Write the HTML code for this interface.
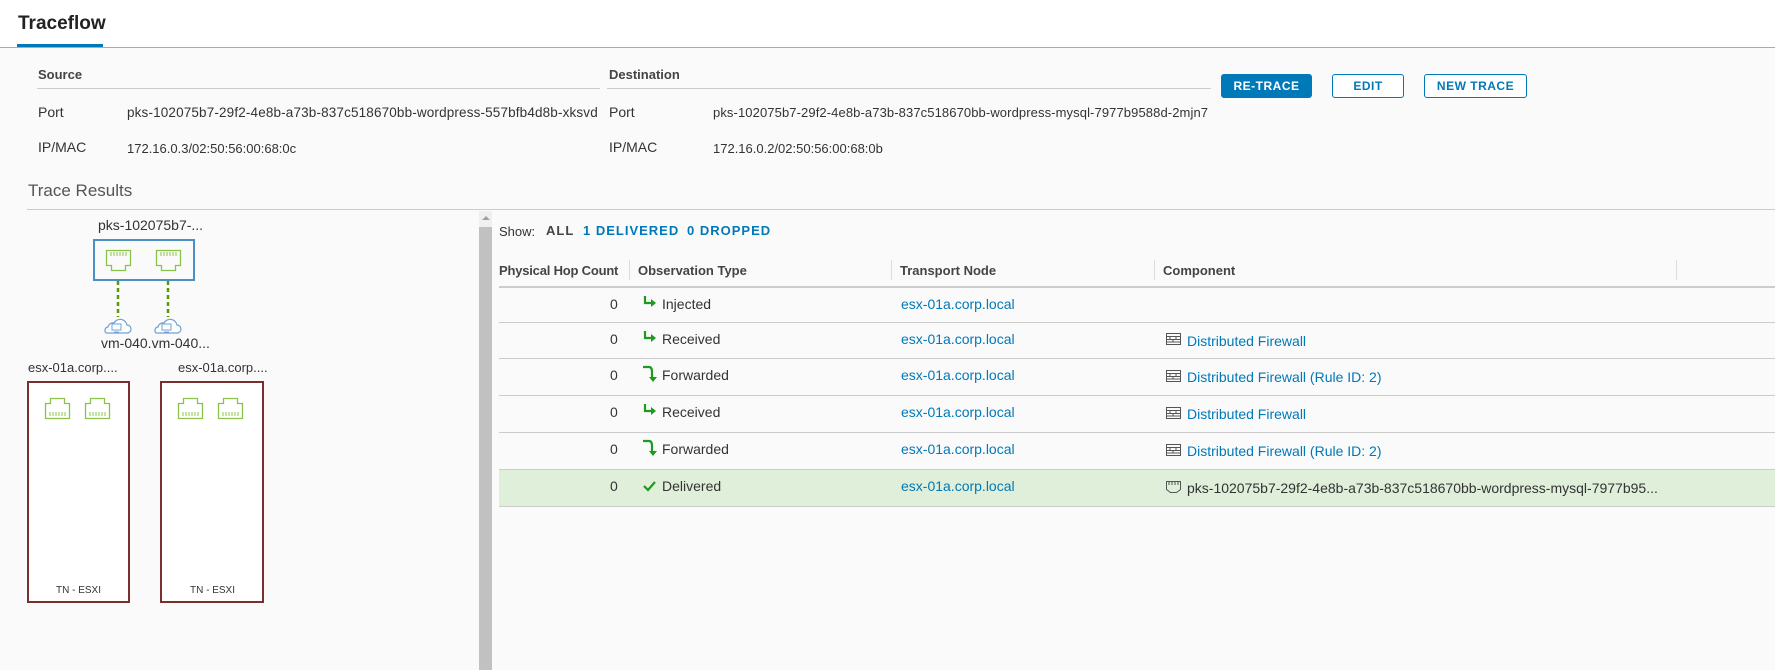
<!DOCTYPE html>
<html><head><meta charset="utf-8"><style>
*{margin:0;padding:0;box-sizing:border-box}
body{width:1775px;height:670px;background:#fafafa;font-family:"Liberation Sans",sans-serif;color:#333;position:relative;overflow:hidden}
.a{position:absolute;white-space:nowrap}
.lk{color:#0079b8}
.lbl{font-size:13px;font-weight:bold;color:#444}
.v{font-size:13px;color:#333}
.btn{position:absolute;height:24px;border:1px solid #0079b8;border-radius:3px;font-size:12px;font-weight:bold;color:#0079b8;text-align:center;line-height:22px;letter-spacing:.5px;background:#fff}
.sep{position:absolute;height:1px;background:#ccc;left:499px;right:0}
.col{position:absolute;top:260px;width:1px;height:20px;background:#ddd}
.r{font-size:14px}
</style></head><body>
<div class="a" style="left:0;top:0;width:1775px;height:47px;background:#fff"></div>
<div class="a" style="left:18px;top:13px;font-size:19px;font-weight:bold;color:#222">Traceflow</div>
<div class="a" style="left:17px;top:44px;width:86px;height:3px;background:#0079b8"></div>
<div class="a" style="left:0;top:47px;width:1775px;height:1px;background:#aaa"></div>

<div class="a lbl" style="left:38px;top:67px">Source</div>
<div class="a" style="left:37px;top:88px;width:563px;height:1px;background:#ccc"></div>
<div class="a lbl" style="left:609px;top:67px">Destination</div>
<div class="a" style="left:607px;top:88px;width:604px;height:1px;background:#ccc"></div>
<div class="a v" style="left:38px;top:104px;font-size:14px">Port</div>
<div class="a v" style="left:127px;top:105px;font-size:13.5px;letter-spacing:0.15px">pks-102075b7-29f2-4e8b-a73b-837c518670bb-wordpress-557bfb4d8b-xksvd</div>
<div class="a v" style="left:38px;top:139px;font-size:14px">IP/MAC</div>
<div class="a v" style="left:127px;top:141px">172.16.0.3/02:50:56:00:68:0c</div>
<div class="a v" style="left:609px;top:104px;font-size:14px">Port</div>
<div class="a v" style="left:713px;top:105px;letter-spacing:0.1px">pks-102075b7-29f2-4e8b-a73b-837c518670bb-wordpress-mysql-7977b9588d-2mjn7</div>
<div class="a v" style="left:609px;top:139px;font-size:14px">IP/MAC</div>
<div class="a v" style="left:713px;top:141px">172.16.0.2/02:50:56:00:68:0b</div>

<div class="btn" style="left:1221px;top:74px;width:91px;background:#0079b8;color:#fff">RE-TRACE</div>
<div class="btn" style="left:1332px;top:74px;width:72px">EDIT</div>
<div class="btn" style="left:1424px;top:74px;width:103px">NEW TRACE</div>

<div class="a" style="left:28px;top:181px;font-size:17px;color:#555">Trace Results</div>
<div class="a" style="left:27px;top:209px;width:1748px;height:1px;background:#ccc"></div>

<div class="a" style="left:98px;top:217px;font-size:14px">pks-102075b7-...</div>
<div class="a" style="left:93px;top:239px;width:102px;height:42px;border:2px solid #4a90c2"></div>
<svg class="a" style="left:0;top:0" width="480" height="670">
<defs>
<g id="pd"><path d="M0 0h24v15h-5v5h-14v-5h-5z" fill="none" stroke="#8bc34a" stroke-width="1.3" transform="translate(0.5,0.5)"/><path d="M5 2v4M8 2v4M11 2v4M14 2v4M17 2v4M20 2v4" stroke="#8bc34a" stroke-width="1"/></g>
<g id="pu"><path d="M0 20h24v-15h-5v-5h-14v5h-5z" fill="none" stroke="#8bc34a" stroke-width="1.3" transform="translate(0.5,0.5)"/><path d="M5 14v4M8 14v4M11 14v4M14 14v4M17 14v4M20 14v4" stroke="#8bc34a" stroke-width="1"/></g>
<g id="cl"><path d="M4 17h21a4 4 0 0 0 0-8a7 7 0 0 0-13-2a5 5 0 0 0-6 4a3.5 3.5 0 0 0-2 6z" fill="#fff" stroke="#6fa0d8" stroke-width="1.2"/><rect x="10" y="8" width="9" height="6" fill="none" stroke="#6fa0d8"/><path d="M12 16h5" stroke="#6fa0d8"/></g>
</defs>
<use href="#pd" x="106" y="250"/><use href="#pd" x="156" y="250"/>
<path d="M118 281v36M168 281v36" stroke="#5a9a00" stroke-width="2.5" stroke-dasharray="4,3"/>
<use href="#cl" x="102" y="316"/><use href="#cl" x="152" y="316"/>
<rect x="28" y="382" width="101" height="220" fill="#fff" stroke="#7b2e2e" stroke-width="2"/>
<rect x="161" y="382" width="102" height="220" fill="#fff" stroke="#7b2e2e" stroke-width="2"/>
<use href="#pu" x="45" y="398"/><use href="#pu" x="85" y="398"/>
<use href="#pu" x="178" y="398"/><use href="#pu" x="218" y="398"/>
</svg>
<div class="a" style="left:101px;top:335px;font-size:14px">vm-040.vm-040...</div>
<div class="a" style="left:28px;top:360px;font-size:13px">esx-01a.corp....</div>
<div class="a" style="left:178px;top:360px;font-size:13px">esx-01a.corp....</div>
<div class="a" style="left:56px;top:585px;font-size:10px">TN - ESXI</div>
<div class="a" style="left:190px;top:585px;font-size:10px">TN - ESXI</div>

<div class="a" style="left:479px;top:211px;width:13px;height:459px;background:#f0f0f0"></div>
<div class="a" style="left:479px;top:227px;width:13px;height:443px;background:#c1c1c1"></div>
<div class="a" style="left:482px;top:216px;width:0;height:0;border-left:4px solid transparent;border-right:4px solid transparent;border-bottom:4px solid #a0a0a0"></div>

<div class="a" style="left:499px;top:224px;font-size:13px">Show:</div>
<div class="a" style="left:546px;top:223px;font-size:13px;font-weight:bold;letter-spacing:1px;color:#444">ALL</div>
<div class="a lk" style="left:583px;top:223px;font-size:13px;font-weight:bold;letter-spacing:1px">1 DELIVERED</div>
<div class="a lk" style="left:687px;top:223px;font-size:13px;font-weight:bold;letter-spacing:1px">0 DROPPED</div>

<div class="a lbl" style="left:499px;top:263px;letter-spacing:-0.2px">Physical Hop Count</div>
<div class="a lbl" style="left:638px;top:263px">Observation Type</div>
<div class="a lbl" style="left:900px;top:263px">Transport Node</div>
<div class="a lbl" style="left:1163px;top:263px">Component</div>
<div class="col" style="left:629px"></div><div class="col" style="left:891px"></div><div class="col" style="left:1154px"></div><div class="col" style="left:1676px"></div>
<div class="sep" style="top:286px;height:2px;background:#ccc"></div>
<div class="a" style="left:499px;top:470px;width:1276px;height:36px;background:#dfefd9"></div>
<div class="sep" style="top:322px"></div><div class="sep" style="top:358px"></div><div class="sep" style="top:395px"></div><div class="sep" style="top:432px"></div><div class="sep" style="top:469px"></div><div class="sep" style="top:506px"></div>

<svg class="a" style="left:0;top:0" width="1775" height="670">
<defs>
<g id="in"><path d="M2 0v7h7" fill="none" stroke="#1e9a1e" stroke-width="2.2"/><path d="M8 3l5 4l-5 4z" fill="#1e9a1e"/></g>
<g id="fw"><path d="M0 0h6q3 0 3 5v6" fill="none" stroke="#1e9a1e" stroke-width="2.2"/><path d="M6 10h8l-4 5z" fill="#1e9a1e"/></g>
<g id="wall" fill="none" stroke="#555" stroke-width="1"><rect x="0.5" y="0.5" width="14" height="11"/><path d="M0.5 3.5h14M0.5 6.5h14M0.5 9h14M4 3.5v3M10 3.5v3M7 6.5v2.5"/></g>
</defs>
<use href="#in" x="643" y="296"/>
<use href="#in" x="643" y="331"/>
<use href="#fw" x="643" y="367"/>
<use href="#in" x="643" y="404"/>
<use href="#fw" x="643" y="441"/>
<path d="M644 486l4 4l7-8" fill="none" stroke="#1e9a1e" stroke-width="2.2"/>
<use href="#wall" x="1166" y="333"/>
<use href="#wall" x="1166" y="370"/>
<use href="#wall" x="1166" y="407"/>
<use href="#wall" x="1166" y="444"/>
<path d="M1166.5 481.5h14v8l-4 3h-6l-4-3z" fill="none" stroke="#555"/><path d="M1169 482v3M1172 482v3M1175 482v3M1178 482v3" stroke="#555"/>
</svg>

<div class="a r" style="left:610px;top:296px">0</div><div class="a r" style="left:662px;top:296px">Injected</div><div class="a r lk" style="left:901px;top:296px">esx-01a.corp.local</div>
<div class="a r" style="left:610px;top:331px">0</div><div class="a r" style="left:662px;top:331px">Received</div><div class="a r lk" style="left:901px;top:331px">esx-01a.corp.local</div><div class="a r lk" style="left:1187px;top:333px">Distributed Firewall</div>
<div class="a r" style="left:610px;top:367px">0</div><div class="a r" style="left:662px;top:367px">Forwarded</div><div class="a r lk" style="left:901px;top:367px">esx-01a.corp.local</div><div class="a r lk" style="left:1187px;top:369px">Distributed Firewall (Rule ID: 2)</div>
<div class="a r" style="left:610px;top:404px">0</div><div class="a r" style="left:662px;top:404px">Received</div><div class="a r lk" style="left:901px;top:404px">esx-01a.corp.local</div><div class="a r lk" style="left:1187px;top:406px">Distributed Firewall</div>
<div class="a r" style="left:610px;top:441px">0</div><div class="a r" style="left:662px;top:441px">Forwarded</div><div class="a r lk" style="left:901px;top:441px">esx-01a.corp.local</div><div class="a r lk" style="left:1187px;top:443px">Distributed Firewall (Rule ID: 2)</div>
<div class="a r" style="left:610px;top:478px">0</div><div class="a r" style="left:662px;top:478px">Delivered</div><div class="a r lk" style="left:901px;top:478px">esx-01a.corp.local</div><div class="a r" style="left:1187px;top:480px">pks-102075b7-29f2-4e8b-a73b-837c518670bb-wordpress-mysql-7977b95...</div>
</body></html>
